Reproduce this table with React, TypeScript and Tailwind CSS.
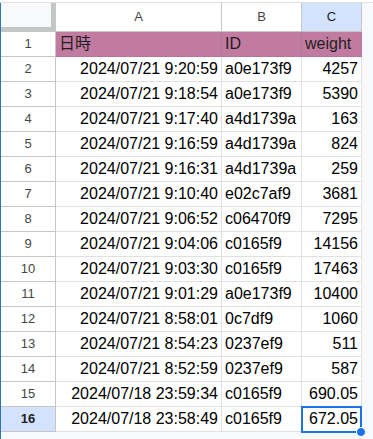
import React from 'react'

const rows = [
  ['2024/07/21 9:20:59', 'a0e173f9', '4257'],
  ['2024/07/21 9:18:54', 'a0e173f9', '5390'],
  ['2024/07/21 9:17:40', 'a4d1739a', '163'],
  ['2024/07/21 9:16:59', 'a4d1739a', '824'],
  ['2024/07/21 9:16:31', 'a4d1739a', '259'],
  ['2024/07/21 9:10:40', 'e02c7af9', '3681'],
  ['2024/07/21 9:06:52', 'c06470f9', '7295'],
  ['2024/07/21 9:04:06', 'c0165f9', '14156'],
  ['2024/07/21 9:03:30', 'c0165f9', '17463'],
  ['2024/07/21 9:01:29', 'a0e173f9', '10400'],
  ['2024/07/21 8:58:01', '0c7df9', '1060'],
  ['2024/07/21 8:54:23', '0237ef9', '511'],
  ['2024/07/21 8:52:59', '0237ef9', '587'],
  ['2024/07/18 23:59:34', 'c0165f9', '690.05'],
  ['2024/07/18 23:58:49', 'c0165f9', '672.05'],
]

const font = { fontFamily: '"Liberation Sans", Arial, "Noto Sans CJK JP", sans-serif' }

export default function App() {
  return (
    <div className="w-[373px] h-[439px] bg-[#f8f9fa] overflow-hidden text-black" style={font}>
      <div className="h-[3px] border-b border-[#e0e0e0] bg-white" />
      <div className="flex">
        <div className="w-[1px] h-[436px] bg-[#2a78b8]" />
        <div className="w-[361px] bg-white self-start relative">
          {/* column headers */}
          <div className="flex h-[29px]">
            <div className="w-[55px] bg-[#f8f9fa] border-r-[5px] border-b-[5px] border-[#c4c7c5]" />
            <div className="w-[166px] flex items-center justify-center text-[13px] text-[#444746] border-r border-b border-[#c4c7c5]">A</div>
            <div className="w-[80px] flex items-center justify-center text-[13px] text-[#444746] border-r border-b border-[#c4c7c5]">B</div>
            <div className="w-[60px] flex items-center justify-center text-[13px] text-[#1f1f1f] bg-[#d3e3fd] border-r border-b border-[#c4c7c5]">C</div>
          </div>
          {/* header row */}
          <div className="flex h-[25px]">
            <div className="w-[55px] flex items-center justify-center text-[13px] text-[#444746] border-r border-b border-[#c4c7c5]">1</div>
            <div className="w-[166px] flex items-center px-[3px] text-[16px] bg-[#c27ba0] text-[#1f1f1f] border-r border-b border-[#b4779a]" style={{ fontFamily: '"Liberation Sans", "Noto Sans CJK JP", sans-serif' }}>日時</div>
            <div className="w-[80px] flex items-center px-[3px] text-[16px] bg-[#c27ba0] text-[#1f1f1f] border-r border-b border-[#b4779a]">ID</div>
            <div className="w-[60px] flex items-center px-[3px] text-[16px] bg-[#c27ba0] text-[#1f1f1f] border-r border-b border-[#b4779a]">weight</div>
          </div>
          {rows.map((r, i) => {
            const last = i === rows.length - 1
            return (
              <div className="flex h-[25px]" key={i}>
                <div
                  className={
                    last
                      ? 'w-[55px] flex items-center justify-center text-[13px] font-bold text-[#1f1f1f] bg-[#d3e3fd] border-r border-b border-[#c4c7c5]'
                      : 'w-[55px] flex items-center justify-center text-[13px] text-[#444746] border-r border-b border-[#c4c7c5]'
                  }
                >
                  {i + 2}
                </div>
                <div className="w-[166px] flex items-center justify-end px-[3px] text-[16px] border-r border-b border-[#e1e1e1]">{r[0]}</div>
                <div className="w-[80px] flex items-center px-[3px] text-[16px] border-r border-b border-[#e1e1e1] whitespace-nowrap">{r[1]}</div>
                <div className="w-[60px] flex items-center justify-end px-[3px] text-[16px] border-r border-b border-[#e1e1e1]">{r[2]}</div>
              </div>
            )
          })}
          {/* selection on C16 */}
          <div className="absolute left-[300px] top-[403px] w-[61px] h-[27px] border-2 border-[#1a73e8]" />
          <div className="absolute left-[355px] top-[424px] w-[10px] h-[10px] rounded-full bg-[#1a73e8] border border-white" />
        </div>
      </div>
    </div>
  )
}
